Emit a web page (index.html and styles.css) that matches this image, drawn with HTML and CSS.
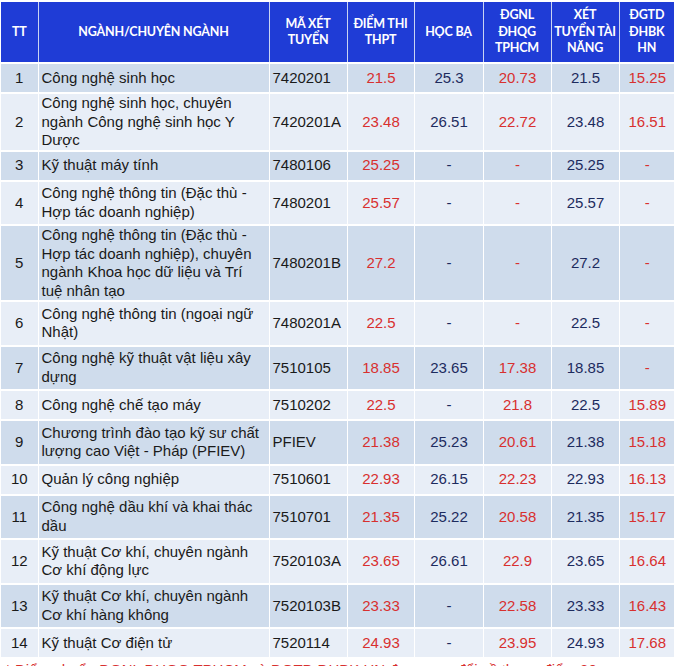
FILE: index.html
```html
<!DOCTYPE html>
<html lang="vi">
<head>
<meta charset="utf-8">
<title>Điểm chuẩn</title>
<link rel="stylesheet" href="styles.css">
</head>
<body>
<table class="scores">
  <colgroup>
    <col class="c-tt"><col class="c-name"><col class="c-code"><col class="c-num"><col class="c-num2"><col class="c-num3"><col class="c-num3"><col class="c-last">
  </colgroup>
  <thead>
    <tr>
      <th>TT</th>
      <th>NGÀNH/CHUYÊN NGÀNH</th>
      <th>MÃ XÉT<br>TUYỂN</th>
      <th>ĐIỂM THI<br>THPT</th>
      <th>HỌC BẠ</th>
      <th>ĐGNL<br>ĐHQG<br>TPHCM</th>
      <th><span class="nw">XÉT</span><br><span class="nw">TUYỂN TÀI</span><br><span class="nw">NĂNG</span></th>
      <th>ĐGTD<br>ĐHBK<br>HN</th>
    </tr>
  </thead>
  <tbody>
    <tr><td class="tt">1</td><td class="name">Công nghệ sinh học</td><td class="code">7420201</td><td class="red">21.5</td><td class="navy">25.3</td><td class="red">20.73</td><td class="navy">21.5</td><td class="red">15.25</td></tr>
    <tr class="compact"><td class="tt">2</td><td class="name">Công nghệ sinh học, chuyên ngành Công nghệ sinh học Y Dược</td><td class="code">7420201A</td><td class="red">23.48</td><td class="navy">26.51</td><td class="red">22.72</td><td class="navy">23.48</td><td class="red">16.51</td></tr>
    <tr><td class="tt">3</td><td class="name">Kỹ thuật máy tính</td><td class="code">7480106</td><td class="red">25.25</td><td class="navy">-</td><td class="red">-</td><td class="navy">25.25</td><td class="red">-</td></tr>
    <tr><td class="tt">4</td><td class="name">Công nghệ thông tin (Đặc thù - Hợp tác doanh nghiệp)</td><td class="code">7480201</td><td class="red">25.57</td><td class="navy">-</td><td class="red">-</td><td class="navy">25.57</td><td class="red">-</td></tr>
    <tr class="compact"><td class="tt">5</td><td class="name">Công nghệ thông tin (Đặc thù - Hợp tác doanh nghiệp), chuyên ngành Khoa học dữ liệu và Trí tuệ nhân tạo</td><td class="code">7480201B</td><td class="red">27.2</td><td class="navy">-</td><td class="red">-</td><td class="navy">27.2</td><td class="red">-</td></tr>
    <tr><td class="tt">6</td><td class="name">Công nghệ thông tin (ngoại ngữ Nhật)</td><td class="code">7480201A</td><td class="red">22.5</td><td class="navy">-</td><td class="red">-</td><td class="navy">22.5</td><td class="red">-</td></tr>
    <tr><td class="tt">7</td><td class="name">Công nghệ kỹ thuật vật liệu xây dựng</td><td class="code">7510105</td><td class="red">18.85</td><td class="navy">23.65</td><td class="red">17.38</td><td class="navy">18.85</td><td class="red">-</td></tr>
    <tr><td class="tt">8</td><td class="name">Công nghệ chế tạo máy</td><td class="code">7510202</td><td class="red">22.5</td><td class="navy">-</td><td class="red">21.8</td><td class="navy">22.5</td><td class="red">15.89</td></tr>
    <tr><td class="tt">9</td><td class="name">Chương trình đào tạo kỹ sư chất lượng cao Việt - Pháp (PFIEV)</td><td class="code">PFIEV</td><td class="red">21.38</td><td class="navy">25.23</td><td class="red">20.61</td><td class="navy">21.38</td><td class="red">15.18</td></tr>
    <tr><td class="tt">10</td><td class="name">Quản lý công nghiệp</td><td class="code">7510601</td><td class="red">22.93</td><td class="navy">26.15</td><td class="red">22.23</td><td class="navy">22.93</td><td class="red">16.13</td></tr>
    <tr><td class="tt">11</td><td class="name">Công nghệ dầu khí và khai thác dầu</td><td class="code">7510701</td><td class="red">21.35</td><td class="navy">25.22</td><td class="red">20.58</td><td class="navy">21.35</td><td class="red">15.17</td></tr>
    <tr><td class="tt">12</td><td class="name">Kỹ thuật Cơ khí, chuyên ngành Cơ khí động lực</td><td class="code">7520103A</td><td class="red">23.65</td><td class="navy">26.61</td><td class="red">22.9</td><td class="navy">23.65</td><td class="red">16.64</td></tr>
    <tr><td class="tt">13</td><td class="name">Kỹ thuật Cơ khí, chuyên ngành Cơ khí hàng không</td><td class="code">7520103B</td><td class="red">23.33</td><td class="navy">-</td><td class="red">22.58</td><td class="navy">23.33</td><td class="red">16.43</td></tr>
    <tr><td class="tt">14</td><td class="name">Kỹ thuật Cơ điện tử</td><td class="code">7520114</td><td class="red">24.93</td><td class="navy">-</td><td class="red">23.95</td><td class="navy">24.93</td><td class="red">17.68</td></tr>
  </tbody>
</table>
<p class="note">* Điểm chuẩn ĐGNL ĐHQG TPHCM và ĐGTD ĐHBK HN được quy đổi về thang điểm 30</p>
</body>
</html>
```

FILE: styles.css
```css
html, body {
  margin: 0;
  padding: 0;
  background: #ffffff;
}

body {
  padding: 2px 0 0 1px;
  font-family: "Liberation Sans", Arial, sans-serif;
}

.scores {
  border-collapse: collapse;
  table-layout: fixed;
  width: 673px;
}

.c-tt { width: 37px; }
.c-name { width: 231px; }
.c-code { width: 78px; }
.c-num { width: 67px; }
.c-num2 { width: 69px; }
.c-num3 { width: 68px; }
.c-last { width: 55px; }

.scores th {
  background: #1f3cd6;
  color: #ffffff;
  font-family: Lato, "Liberation Sans", sans-serif;
  font-weight: 700;
  font-size: 12.5px;
  letter-spacing: -0.2px;
  line-height: 16.5px;
  height: 60px;
  padding: 0 1px;
  text-align: center;
  vertical-align: middle;
  border-left: 1px solid #c9d3f2;
  border-bottom: 2px solid #ffffff;
}

.scores th:first-child {
  border-left: none;
}

.nw {
  white-space: nowrap;
}

.scores tbody tr {
  height: 30px;
}

.scores tbody tr:nth-child(odd) td {
  background: #cfdcec;
}

.scores tbody tr:nth-child(even) td {
  background: #e8eef7;
}

.scores td {
  font-size: 15px;
  line-height: 18.5px;
  padding: 2.75px 2px 2.75px 3px;
  vertical-align: middle;
  text-align: center;
  border-left: 1px solid #ffffff;
  border-bottom: 2px solid #ffffff;
  color: #1a1a1a;
}

.scores tr.compact td {
  padding-top: 0;
  padding-bottom: 0;
}

.scores td:first-child {
  border-left: none;
}

.scores td.name,
.scores td.code {
  text-align: left;
}

.scores td.tt {
  text-align: center;
  padding-left: 1px;
  padding-right: 1px;
}

.scores td.red {
  color: #d8302f;
}

.scores td.navy {
  color: #1d2b5e;
}

.note {
  margin: 3px 0 0 4px;
  font-size: 15px;
  line-height: 16px;
  color: #d8302f;
}
```
